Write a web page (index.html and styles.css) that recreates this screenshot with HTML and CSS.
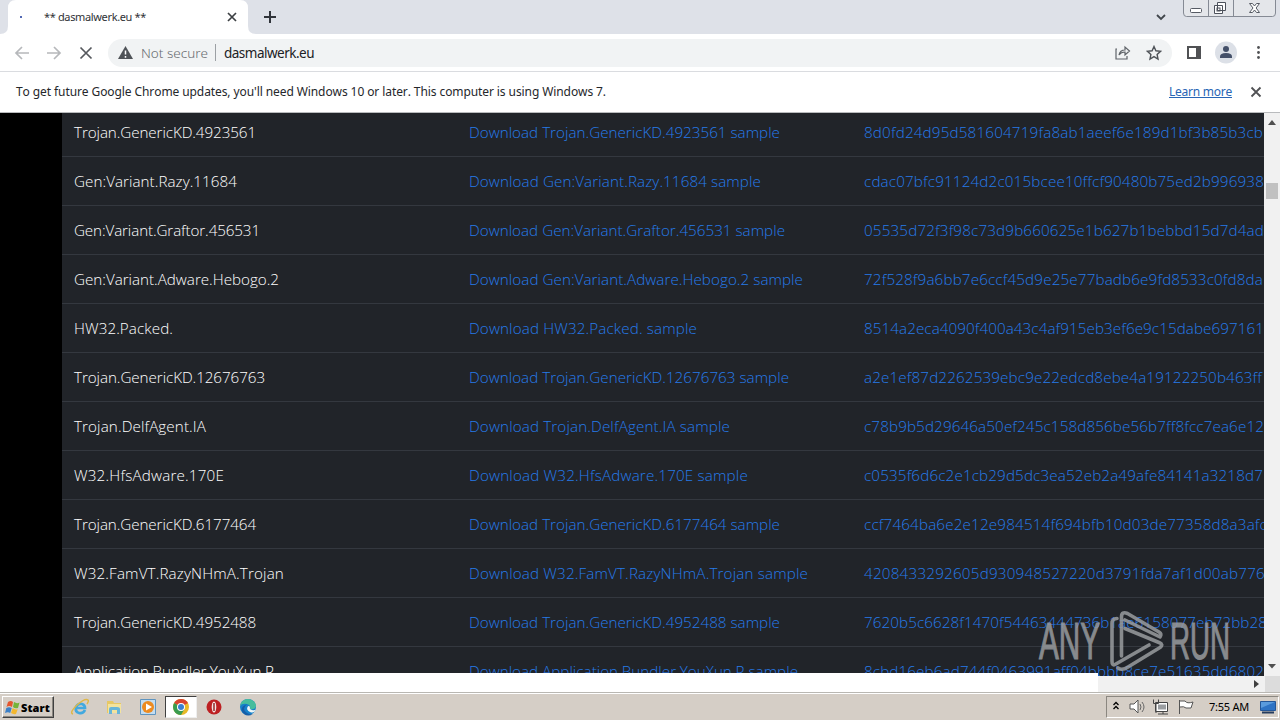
FILE: index.html
```html
<!DOCTYPE html>
<html lang="en">
<head>
<meta charset="utf-8">
<title>** dasmalwerk.eu **</title>
<link rel="stylesheet" href="styles.css">
</head>
<body>
<div class="screen">
  <header class="tabs">
    <svg class="tab-shape" width="264" height="34" viewBox="0 0 264 34"><path fill="#fff" d="M0 34q8 0 8-8V8q0-8 8-8h224q8 0 8 8v18q0 8 8 8z"/></svg>
    <div class="tab"><i class="spinner"></i><span class="tab-title" data-w="102">** dasmalwerk.eu **</span><svg class="tab-close" width="10" height="10" viewBox="0 0 10 10"><path d="M1 1l8 8M9 1L1 9" stroke="#3c4043" stroke-width="1.7"/></svg></div>
    <svg class="plus" width="12" height="12" viewBox="0 0 12 12"><path d="M6 0v12M0 6h12" stroke="#30343a" stroke-width="2"/></svg>
    <svg class="chevron" width="10" height="7" viewBox="0 0 10 7"><path d="M1 1l4 4 4-4" fill="none" stroke="#41464c" stroke-width="1.8"/></svg>
    <svg class="window-buttons" width="94" height="18" viewBox="0 0 94 18">
      <path d="M.5 0v13q0 3.500 3 3.500h86q3 0 3-3.500V0M25.500 0v16M50.500 0v16" fill="#e4e6ea" stroke="#858a94"/>
      <rect x="7.500" y="8.500" width="11" height="4" rx="1" fill="#fff" stroke="#565b64"/>
      <path d="M34.500 2.500h8v8h-8zM31.500 5.500h8v8h-8z" fill="#fff" stroke="#4c515b"/><rect x="34" y="8" width="3" height="3" fill="none" stroke="#4c515b"/>
      <path d="M66.500 3.500h3l2 2.500 2-2.500h3l-3.400 4.500 3.400 4.500h-3l-2-2.500-2 2.500h-3L70 8z" fill="#fff" stroke="#565b64"/>
    </svg>
  </header>

  <div class="toolbar">
    <svg class="nav" width="100" height="20" viewBox="0 0 100 20" fill="none" stroke-width="1.700"><path d="M21 10H8M14 4l-6 6 6 6" stroke="#b6b8bb"/><path d="M39 10h13M46 4l6 6-6 6" stroke="#b6b8bb"/><path d="M72.500 4.500l11 11M83.500 4.500l-11 11" stroke="#55585d"/></svg>
    <div class="address">
      <svg width="15" height="14" viewBox="0 0 15 14"><path d="M7.500 0L15 13H0z" fill="#4f5358"/><path d="M7.500 4.500v4M7.500 10v1.700" stroke="#fff" stroke-width="1.500"/></svg>
      <span class="insecure" data-w="67">Not secure</span><i class="separator"></i><span class="domain" data-w="90">dasmalwerk.eu</span>
      <svg class="share" width="16" height="15" viewBox="0 0 16 15" fill="none" stroke="#5f6368" stroke-width="1.200"><path d="M2 4H1v10h11v-3M4 10q1-5 6-5V2l4.500 4L10 10V7Q6 7 4 10z"/></svg>
      <svg class="star" width="16" height="16" viewBox="0 0 16 16"><path d="M8 1.500l1.900 4.300 4.600.5-3.400 3.100.9 4.600-4-2.400L4 14l.9-4.600-3.400-3.100 4.600-.5z" fill="none" stroke="#4f5358" stroke-width="1.400"/></svg>
    </div>
    <svg class="tools" width="80" height="24" viewBox="0 0 80 24"><path d="M1 5h14v13H1z" fill="#505154"/><path d="M3 7h7v9H3z" fill="#fff"/><circle cx="40" cy="11.500" r="11" fill="#dce0e7"/><circle cx="40" cy="8" r="3" fill="#445069"/><path d="M34 17v-1.500q0-3.500 6-3.500t6 3.500V17z" fill="#445069"/><g fill="#505154"><circle cx="72.500" cy="6.500" r="1.400"/><circle cx="72.500" cy="11.500" r="1.400"/><circle cx="72.500" cy="16.500" r="1.400"/></g></svg>
  </div>

  <div class="notice"><span data-w="590">To get future Google Chrome updates, you'll need Windows 10 or later. This computer is using Windows 7.</span><a class="learn" data-w="63">Learn more</a><svg width="12" height="12" viewBox="0 0 12 12"><path d="M1.500 1.500l9 9M10.500 1.500l-9 9" stroke="#505154" stroke-width="1.800"/></svg></div>

  <main class="viewport">
    <div class="margin"></div>
    <div class="table" id="table"></div>
    <div class="scroll-v"><svg width="8" height="5" viewBox="0 0 8 5"><path d="M0 5l4-5 4 5z" fill="#505050"/></svg><i class="thumb"></i><svg class="down" width="8" height="5" viewBox="0 0 8 5"><path d="M0 0l4 4.500L8 0z" fill="#505050"/></svg></div>
    <div class="watermark">
      <span class="mark-word" data-scale="61">ANY</span>
      <svg width="58" height="66" viewBox="0 0 58 66" fill="none" stroke="#999c9f" stroke-width="3.600" stroke-linejoin="round" stroke-linecap="round"><path d="M8 9.500q-5 0-5 5V52q0 5 3 3.500L40 36"/><path d="M12.500 47V8q0-6 6-3.500L50 23q3 2 1 5L16 11"/><path d="M16 19.500L50 33.500q5 2 1 5L19 58q-6 4-10 1"/></svg>
      <span class="mark-word" data-scale="60">RUN</span>
    </div>
    <div class="bubble"></div>
  </main>
  <div class="scroll-h"><svg width="5" height="8" viewBox="0 0 5 8"><path d="M0 0l5 4-5 4z" fill="#404040"/></svg><i></i></div>

  <footer class="taskbar">
    <div class="start"><svg width="15" height="15" viewBox="0 0 15 15"><path d="M3 2q3-2 5 0L7 7Q4 5 1.500 7z" fill="#e5562f"/><path d="M9 2q3 2 5.500.5L13 8q-3 1-5-1z" fill="#75b43a"/><path d="M1.300 8Q4 6.500 6.700 8l-1.500 5Q3 11.500 0 13z" fill="#3b80c8"/><path d="M7.700 8q2 2 5 1.200L11 14q-3 .5-5-1z" fill="#f3b72e"/></svg><b data-w="29">Start</b></div>
    <div class="launch">
      <svg width="18" height="18" viewBox="0 0 18 18"><path d="M14 12q-2 4-6 3-4-1-3-6 2-4 6-3 3 1 3 4H6" fill="none" stroke="#42a9df" stroke-width="2.700"/><path d="M2 16q-4-1 4-9Q14 0 17 2q1 1-1 4" fill="none" stroke="#dfb746" stroke-width="1.500"/></svg>
      <svg width="18" height="18" viewBox="0 0 18 18"><path d="M2 3h6l1 2h7v10H2z" fill="#e7c865"/><path d="M3 6h13v9H3z" fill="#f4e39d"/><path d="M4 16v-5q0-2 2-2h6q3 0 3 2v5h-3v-4H7v4z" fill="#68b5d9"/></svg>
      <svg width="18" height="18" viewBox="0 0 18 18"><path d="M1.500 1.500h15v15h-15z" fill="#c4ddf0" stroke="#5e94bf"/><circle cx="9" cy="9" r="6" fill="#ed8b20"/><path d="M7 5.500l6 3.500-6 3.500z" fill="#fff"/></svg>
      <span class="active"><svg width="18" height="18" viewBox="0 0 18 18"><circle cx="9" cy="9" r="8" fill="#e8b928"/><path d="M9 9L2.100 5A8 8 0 0 1 16 5z" fill="#d84330"/><path d="M9 9L2.100 5A8 8 0 0 0 9 17l3.500-6z" fill="#3a9c50"/><circle cx="9" cy="9" r="4" fill="#fff"/><circle cx="9" cy="9" r="3" fill="#397fd1"/></svg></span>
      <svg width="18" height="18" viewBox="0 0 18 18"><circle cx="9" cy="9" r="7.500" fill="#bd2022"/><ellipse cx="9" cy="9" rx="2.300" ry="5.500" fill="#f3e7e5"/><path d="M9 5v8" stroke="#8d1719" stroke-width="1.400"/></svg>
      <svg width="18" height="18" viewBox="0 0 18 18"><circle cx="9" cy="9" r="8" fill="#1681ca"/><path d="M1 8Q3 0 11 1.300q6 2 6 7Q16 12 11 11q1-4-3-5-5-1-7 2z" fill="#45bd9d"/><path d="M8 6q-6 5 0 9 3 2 6 1-5 3-9 0-6-6 3-10z" fill="#165da7"/><path d="M8.500 9q1-2 2.500 0-1 2 2 3 3 1 4-1-2 5-6 3-4-2-2.500-5z" fill="#eef6f7"/></svg>
    </div>
    <div class="tray">
      <svg class="tray-icons" width="84" height="18" viewBox="0 0 84 18" fill="none"><path d="M1.500 7L4 4.500 6.500 7M1.500 11L4 8.500 6.500 11" stroke="#000" stroke-width="1.300"/><path d="M18 6h4l4-4v13l-4-4h-4z" fill="#fff" stroke="#555"/><path d="M28 6q2 3 0 6M30 4q4 5 0 10" stroke="#666"/><path d="M43.500 4.500h12v9h-12z" fill="#fff" stroke="#444"/><path d="M46 6.500h8v5h-8z" fill="#9a9da0"/><path d="M46 16h10M51 14v2M41.500 1.500v4h5v-4M44 5v10" stroke="#444"/><path d="M67.500 2v14M68 3h5q2 3 8 1l-2 6h-5q-2-2-6-1" fill="#fff" stroke="#555"/></svg>
      <span class="clock" data-w="40">7:55 AM</span>
      <svg width="16" height="15" viewBox="0 0 16 15"><path d="M.5 1.500h15v9H.5z" fill="#2e73c4" stroke="#245697"/><path d="M1 2h14L1 8z" fill="#5a9bdd"/><path d="M2 12.500h12" stroke="#253c5e" stroke-width="2"/></svg>
    </div>
  </footer>
</div>
<script src="main.js"></script>
</body>
</html>
```

FILE: styles.css
```css
* { box-sizing: border-box; }
body { margin: 0; overflow: hidden; font-family: "Noto Sans", sans-serif; }
svg { display: block; flex: none; }
.screen { width: 1280px; height: 720px; display: flex; flex-direction: column; overflow: hidden; background: #fff; }
.screen > * { flex: none; }
[data-w] { white-space: pre; display: inline-block; }

.tabs { height: 34px; background: #dee1e8; display: flex; align-items: flex-start; position: relative; }
.tab-shape { position: absolute; left: 0; top: 0; }
.tab { position: relative; width: 248px; height: 34px; padding-left: 20px; display: flex; align-items: center; font-size: 11px; color: #303236; }
.tab-title { width: 102px; padding-bottom: 2px; }
.spinner { width: 2px; height: 2px; background: #5269b4; margin-right: 22px; }
.tab-close { margin-left: 81px; }
.plus { margin: 11px 0 0 16px; }
.chevron { margin: 14px 0 0 880px; }
.window-buttons { margin-left: 17px; }

.toolbar { height: 38px; display: flex; align-items: center; border-bottom: 1px solid #dadce0; }
.nav { margin-left: 8px; }
.address { width: 1064px; height: 28px; padding-left: 10px; border-radius: 14px; background: #f1f3f4; display: flex; align-items: center; font-size: 13.500px; }
.insecure { width: 66px; margin-left: 8px; color: #686c70; font-weight: 300; }
.separator { width: 1px; height: 17px; margin: 0 8px 0 8px; background: #9ca0a4; }
.domain { width: 90px; color: #202124; }
.share { margin-left: 801px; }
.star { margin-left: 15px; }
.tools { margin-left: 14px; }

.notice { height: 41px; display: flex; align-items: center; padding-left: 16px; border-bottom: 1px solid #b9bbbd; font-size: 12px; color: #25272b; }
.notice > span, .learn { padding-bottom: 2px; }
.learn { margin-left: 563px; width: 63px; color: #2865b5; text-decoration: underline; }
.notice svg { margin-left: 18px; }

.viewport { height: 563px; display: flex; background: #212429; position: relative; overflow: hidden; }
.margin { width: 62px; background: #000; }
.table { width: 1202px; overflow: hidden; font: 300 15.200px/20px "Open Sans", sans-serif; }
.row { height: 49px; padding: 14px 0 0 12px; border-bottom: 1px solid #34383f; display: grid; grid-template-columns: 395px 395px 412px; white-space: nowrap; color: #fff; }
.row:first-child { height: 44px; padding-top: 9px; }
.row a { color: #267bea; }
.scroll-v { width: 16px; background: #f1f1f1; padding-top: 7px; display: flex; flex-direction: column; align-items: center; }
.thumb { width: 12px; height: 16px; background: #c1c1c1; margin-top: 58px; }
.down { margin-top: 465px; }
.bubble { position: absolute; left: 0; top: 560px; width: 1098px; height: 3px; background: #fff; }
.watermark { position: absolute; left: 1039px; top: 496px; height: 66px; display: flex; align-items: center; opacity: .85; }
.watermark svg { margin: 0 3px 0 9px; }
.mark-word { font: 400 51px/66px "Liberation Sans", sans-serif; color: #999c9f; -webkit-text-stroke: 1.200px #999c9f; transform-origin: left center; white-space: nowrap; }

.scroll-h { height: 17px; background: linear-gradient(90deg, #fff 1098px, #f1f1f1 1098px); display: flex; align-items: center; justify-content: flex-end; border-bottom: 1px solid #b9b7b2; }
.scroll-h svg { margin-right: 6px; }
.scroll-h i { width: 15px; height: 16px; background: #dcdcdc; }

.taskbar { height: 27px; background: #d5cec6; border-top: 1px solid #fff; display: flex; align-items: center; }
.start { width: 52px; height: 22px; margin-left: 2px; padding-left: 2px; display: flex; align-items: center; gap: 1px; border: 1px solid #fff; border-right-color: #404040; border-bottom-color: #404040; box-shadow: inset -1px -1px #8b8780; font: bold 11px "Noto Sans", sans-serif; }
.launch { display: flex; align-items: center; margin-left: 17px; gap: 16px; }
.active { width: 32px; height: 22px; margin: 0 -8px; background: #fff; border: 1px solid #404040; border-right-color: #eee; border-bottom-color: #eee; display: flex; align-items: center; justify-content: center; }
.tray { width: 173px; height: 22px; margin-left: auto; margin-right: 1px; padding-left: 5px; border: 1px solid #8b8780; border-right-color: #fff; border-bottom-color: #fff; display: flex; align-items: center; }
.clock { width: 40px; margin: 0 11px 0 13px; padding-bottom: 1px; font-size: 11px; color: #000; }
```

FILE: main.js
```javascript
const rows = [
  ["Trojan.GenericKD.4923561", 182, 311, "8d0fd24d95d581604719fa8ab1aeef6e189d1bf3b85b3cb", 399],
  ["Gen:Variant.Razy.11684", 163, 292, "cdac07bfc91124d2c015bcee10ffcf90480b75ed2b996938", 400],
  ["Gen:Variant.Graftor.456531", 186, 316, "05535d72f3f98c73d9b660625e1b627b1bebbd15d7d4ad", 400],
  ["Gen:Variant.Adware.Hebogo.2", 205, 334, "72f528f9a6bb7e6ccf45d9e25e77badb6e9fd8533c0fd8da", 399],
  ["HW32.Packed.", 99, 228, "8514a2eca4090f400a43c4af915eb3ef6e9c15dabe697161", 400],
  ["Trojan.GenericKD.12676763", 191, 320, "a2e1ef87d2262539ebc9e22edcd8ebe4a19122250b463ff", 398],
  ["Trojan.DelfAgent.IA", 132, 261, "c78b9b5d29646a50ef245c158d856be56b7ff8fcc7ea6e12", 400],
  ["W32.HfsAdware.170E", 150, 279, "c0535f6d6c2e1cb29d5dc3ea52eb2a49afe84141a3218d7", 399],
  ["Trojan.GenericKD.6177464", 182, 311, "ccf7464ba6e2e12e984514f694bfb10d03de77358d8a3afc", 403],
  ["W32.FamVT.RazyNHmA.Trojan", 210, 339, "4208433292605d930948527220d3791fda7af1d00ab776", 401],
  ["Trojan.GenericKD.4952488", 182, 311, "7620b5c6628f1470f54463444736b1ae6158077eb72bb28", 403],
  ["Application.Bundler.YouXun.R", 200, 329, "8cbd16eb6ad744f0463991aff04bbbb8ce7e51635dd6802", 400]
];

const table = document.getElementById("table");
for (const [name, nameWidth, linkWidth, hash, hashWidth] of rows) {
  const row = document.createElement("div");
  row.className = "row";
  for (const [tag, text, width] of [["span", name, nameWidth], ["a", `Download ${name} sample`, linkWidth], ["a", hash, hashWidth]]) {
    const cell = document.createElement("div");
    const label = document.createElement(tag);
    label.textContent = text;
    label.dataset.w = width;
    cell.append(label);
    row.append(cell);
  }
  table.append(row);
}

for (const el of document.querySelectorAll("[data-w]")) {
  const range = document.createRange();
  range.selectNodeContents(el);
  el.style.fontKerning = "none";
  const natural = range.getBoundingClientRect().width;
  const gap = (Number(el.dataset.w) - natural) / el.textContent.length;
  el.style.letterSpacing = `${gap}px`;
}
for (const el of document.querySelectorAll("[data-scale]")) {
  const width = el.getBoundingClientRect().width;
  const target = Number(el.dataset.scale);
  el.style.transform = `scaleX(${target / width})`;
  el.style.width = `${target}px`;
}
```
